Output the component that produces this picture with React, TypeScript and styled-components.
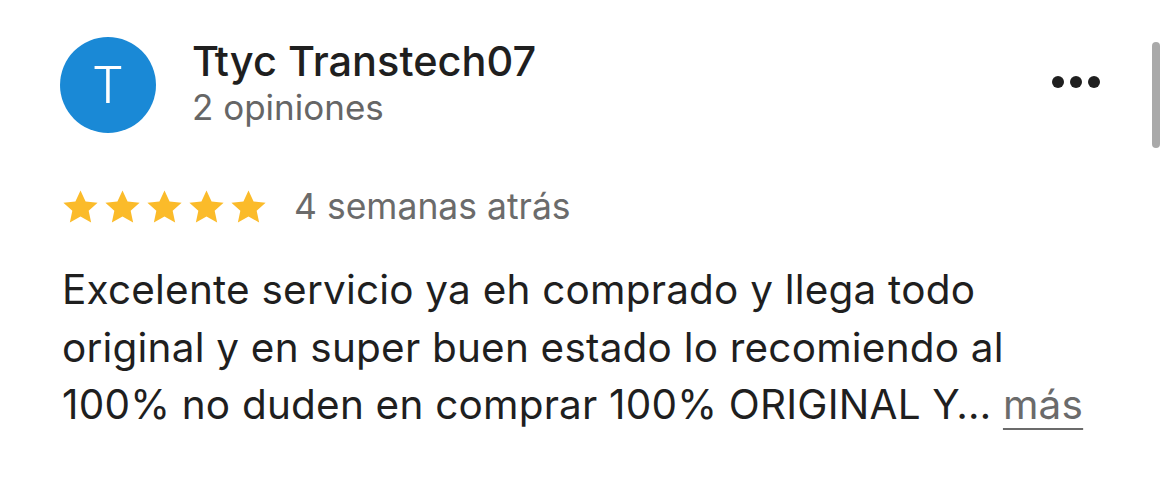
import React from "react";
import styled, { createGlobalStyle } from "styled-components";

const Global = createGlobalStyle`
  html, body { margin: 0; padding: 0; background: #ffffff; }
  body { font-family: Inter, "Noto Sans", sans-serif; }
`;

const Page = styled.div`
  position: relative;
  width: 1170px;
  height: 480px;
  background: #fff;
  box-sizing: border-box;
  padding: 37px 0 0 60px;
  overflow: hidden;
`;

const Header = styled.div`
  display: flex;
  align-items: center;
  gap: 36px;
  width: 1040px;
`;

const Avatar = styled.div`
  width: 96px;
  height: 96px;
  border-radius: 50%;
  background: #1a89d6;
  color: #fff;
  display: flex;
  align-items: center;
  justify-content: center;
  font-size: 50px;
  font-weight: 300;
  flex-shrink: 0;
`;

const Who = styled.div`
  display: flex;
  flex-direction: column;
  flex: 1;
  margin-top: -4px;
`;

const Name = styled.div`
  font-size: 41.5px;
  font-weight: 500;
  color: #1f1f1f;
  line-height: 48px;
`;

const Sub = styled.div`
  font-size: 35px;
  color: #666666;
  line-height: 44px;
`;

const Dots = styled.div`
  display: flex;
  gap: 6px;
  margin-top: -6px;
`;

const Dot = styled.span`
  width: 12px;
  height: 12px;
  border-radius: 50%;
  background: #1f1f1f;
`;

const Scrollbar = styled.div`
  position: absolute;
  right: 10px;
  top: 42px;
  width: 8px;
  height: 106px;
  border-radius: 4px;
  background: #a9a9a9;
`;

const RatingRow = styled.div`
  display: flex;
  align-items: center;
  gap: 27px;
  margin-top: 52px;
  margin-left: 2px;
`;

const Stars = styled.div`
  display: flex;
  gap: 5px;
`;

const DateText = styled.span`
  font-size: 35.5px;
  color: #6b6b6b;
`;

const Body = styled.p`
  margin: 33px 0 0 2px;
  font-size: 40.5px;
  line-height: 57.5px;
  letter-spacing: 0.2px;
  color: #1f1f1f;
  width: 1090px;
`;

const More = styled.span`
  color: #6b6b6b;
  text-decoration: underline;
  text-underline-offset: 9px;
  text-decoration-thickness: 2px;
`;

const Star = () => (
  <svg width="37" height="36" viewBox="0 0 24 23">
    <path
      d="M12 0.8l3.3 7.1 7.8 0.8-5.8 5.2 1.6 7.7L12 17.6l-6.9 4 1.6-7.7L0.9 8.7l7.8-0.8z"
      fill="#fbbb2a"
    />
  </svg>
);

export default function App() {
  return (
    <>
      <Global />
      <Page>
        <Header>
          <Avatar>T</Avatar>
          <Who>
            <Name>Ttyc Transtech07</Name>
            <Sub>2 opiniones</Sub>
          </Who>
          <Dots>
            <Dot />
            <Dot />
            <Dot />
          </Dots>
        </Header>
        <Scrollbar />
        <RatingRow>
          <Stars>
            <Star />
            <Star />
            <Star />
            <Star />
            <Star />
          </Stars>
          <DateText>4 semanas atrás</DateText>
        </RatingRow>
        <Body>
          Excelente servicio ya eh comprado y llega todo
          <br />
          original y en super buen estado lo recomiendo al
          <br />
          100% no duden en comprar 100% ORIGINAL Y… <More>más</More>
        </Body>
      </Page>
    </>
  );
}
